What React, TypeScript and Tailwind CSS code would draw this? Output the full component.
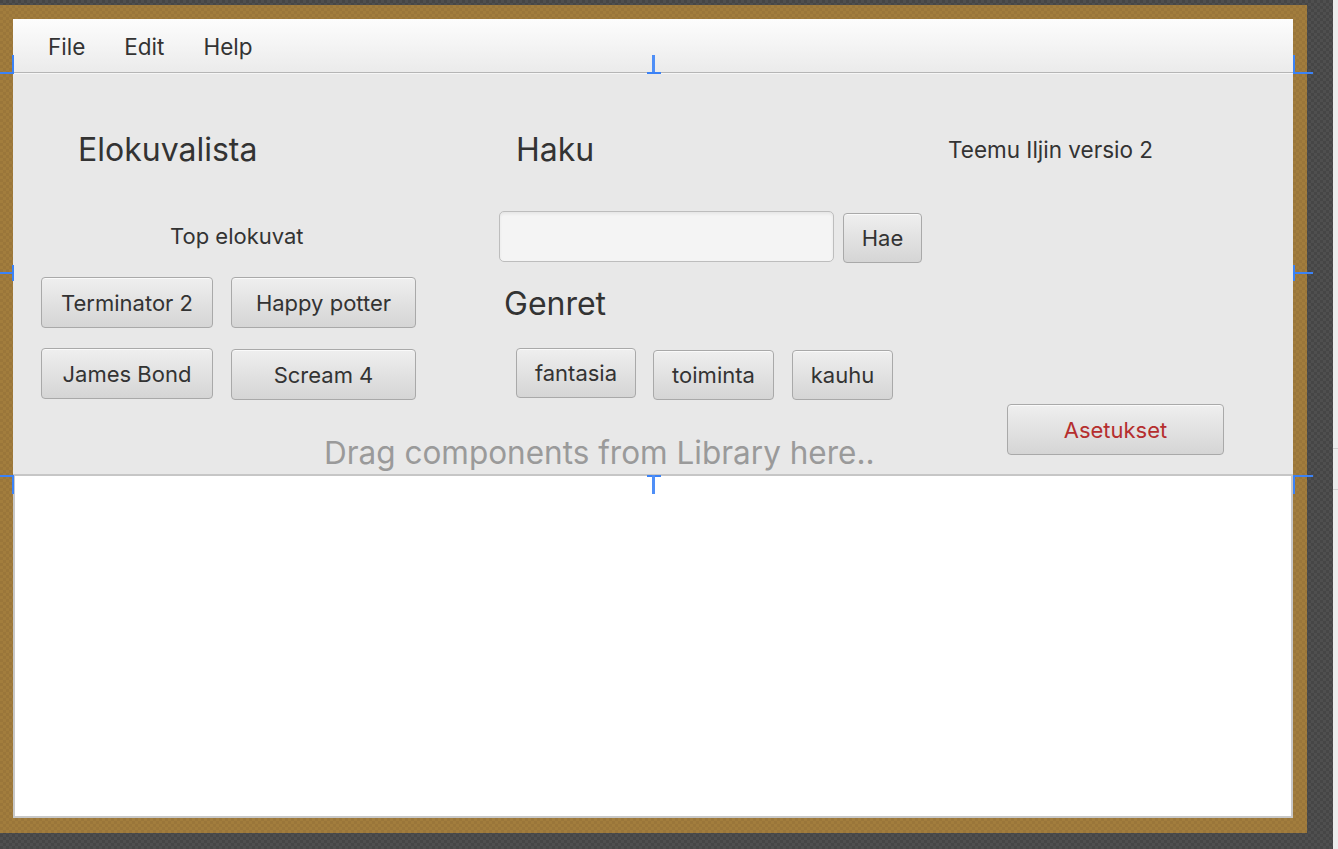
import React from 'react';

const font = { fontFamily: 'Inter, "Noto Sans", "Liberation Sans", sans-serif' };

function FxButton({
  label,
  className = '',
  textClass = 'text-[#333333]',
}: {
  label: string;
  className?: string;
  textClass?: string;
}) {
  return (
    <button
      className={`flex items-center justify-center rounded-[4px] border border-[#a9a9a9] bg-gradient-to-b from-[#efefef] to-[#d5d5d5] shadow-[inset_0_1px_0_#fafafa] text-[22px] leading-none ${textClass} ${className}`}
    >
      {label}
    </button>
  );
}

export default function App() {
  return (
    <div
      className="relative h-[849px] w-[1338px] overflow-hidden bg-[repeating-conic-gradient(#4f4f4f_0_25%,#464646_0_50%)] bg-[length:6px_6px]"
      style={font}
    >
      {/* neighbouring panel edge */}
      <div className="absolute right-0 top-0 flex h-full w-[5px] flex-col bg-[#ececec]">
        <div className="mt-[448px] h-px bg-[#d0d0d0]" />
        <div className="mt-[40px] h-px bg-[#d0d0d0]" />
      </div>

      {/* gold frame */}
      <div className="mt-[5px] h-[828px] w-[1307px] bg-[repeating-conic-gradient(#a27d3d_0_25%,#9a763a_0_50%)] bg-[length:6px_6px] pb-[15px] pl-[13px] pr-[14px] pt-[14px]">
        <div className="flex h-full w-full flex-col bg-white">
          {/* menu bar */}
          <div className="flex h-[54px] shrink-0 items-center gap-[39px] border-b border-[#b5b5b5] bg-gradient-to-b from-[#fdfdfd] to-[#ebebeb] pl-[35px] pt-[3px] text-[22.5px] text-[#333333]">
            <span>File</span>
            <span>Edit</span>
            <span>Help</span>
          </div>

          {/* design panel */}
          <div className="flex h-[403px] shrink-0 border-b-2 border-t border-b-[#c6c6c6] border-t-[#f6f6f6] bg-[#e8e8e8] text-[#333333]">
            {/* column 1 */}
            <div className="flex w-[486px] shrink-0 flex-col pl-[28px] pt-[56px]">
              <div className="ml-[37px] h-[40px] text-[32px] leading-[40px]">Elokuvalista</div>
              <div className="ml-[129px] mt-[51px] h-[30px] text-[22px] leading-[30px]">Top elokuvat</div>
              <div className="mt-[26px] grid w-[375px] grid-cols-[172px_185px] gap-x-[18px] gap-y-[20px]">
                <FxButton label="Terminator 2" className="h-[51px]" />
                <FxButton label="Happy potter" className="h-[51px]" />
                <FxButton label="James Bond" className="h-[51px]" />
                <FxButton label="Scream 4" className="mt-[1px] h-[51px]" />
              </div>
              <div className="ml-[283px] mt-[33px] h-[40px] whitespace-nowrap text-[31.5px] leading-[40px] text-[#9a9a9a]">
                Drag components from Library here..
              </div>
            </div>

            {/* column 2 */}
            <div className="flex w-[449px] shrink-0 flex-col pt-[56px]">
              <div className="ml-[17px] h-[40px] text-[32px] leading-[40px]">Haku</div>
              <div className="mt-[41px] flex items-start gap-[9px]">
                <div className="h-[51px] w-[335px] rounded-[5px] border border-[#bdbdbd] bg-[#f4f4f4] shadow-[inset_0_2px_3px_rgba(0,0,0,0.06)]" />
                <FxButton label="Hae" className="mt-[2px] h-[50px] w-[79px]" />
              </div>
              <div className="ml-[5px] mt-[21px] h-[40px] text-[32px] leading-[40px]">Genret</div>
              <div className="ml-[17px] mt-[24px] flex items-start">
                <FxButton label="fantasia" className="h-[50px] w-[120px]" />
                <FxButton label="toiminta" className="ml-[17px] mt-[2px] h-[50px] w-[121px]" />
                <FxButton label="kauhu" className="ml-[18px] mt-[2px] h-[50px] w-[101px]" />
              </div>
            </div>

            {/* column 3 */}
            <div className="flex flex-1 flex-col pt-[56px]">
              <div className="h-[40px] text-[22.5px] leading-[40px]">Teemu Iljin versio 2</div>
              <FxButton
                label="Asetukset"
                className="ml-[59px] mt-[234px] h-[51px] w-[217px]"
                textClass="text-[#b52e2e]"
              />
            </div>
          </div>

          {/* empty content area */}
          <div className="flex-1 border-x-2 border-b-2 border-[#c8c8c8] bg-white" />
        </div>
      </div>

      {/* Scene Builder guide markers */}
      <div className="absolute left-[12px] top-[55px] h-[19px] w-[2px] bg-[#3b82f6]" />
      <div className="absolute left-0 top-[72px] h-[2px] w-[14px] bg-[#3b82f6]" />
      <div className="absolute left-[1293px] top-[55px] h-[19px] w-[2px] bg-[#3b82f6]" />
      <div className="absolute left-[1293px] top-[72px] h-[2px] w-[20px] bg-[#3b82f6]" />
      <div className="absolute left-[652px] top-[55px] h-[19px] w-[3px] bg-[#4f8ff7]" />
      <div className="absolute left-[647px] top-[72px] h-[2px] w-[14px] bg-[#3b82f6]" />

      <div className="absolute left-[12px] top-[265px] h-[16px] w-[2px] bg-[#3b82f6]" />
      <div className="absolute left-0 top-[272px] h-[2px] w-[13px] bg-[#3b82f6]" />
      <div className="absolute left-[1293px] top-[265px] h-[16px] w-[2px] bg-[#3b82f6]" />
      <div className="absolute left-[1293px] top-[272px] h-[2px] w-[20px] bg-[#3b82f6]" />

      <div className="absolute left-0 top-[475px] h-[2px] w-[14px] bg-[#3b82f6]" />
      <div className="absolute left-[12px] top-[475px] h-[19px] w-[2px] bg-[#3b82f6]" />
      <div className="absolute left-[1293px] top-[475px] h-[2px] w-[20px] bg-[#3b82f6]" />
      <div className="absolute left-[1293px] top-[475px] h-[19px] w-[2px] bg-[#3b82f6]" />
      <div className="absolute left-[647px] top-[475px] h-[2px] w-[14px] bg-[#3b82f6]" />
      <div className="absolute left-[652px] top-[475px] h-[19px] w-[3px] bg-[#4f8ff7]" />
    </div>
  );
}
